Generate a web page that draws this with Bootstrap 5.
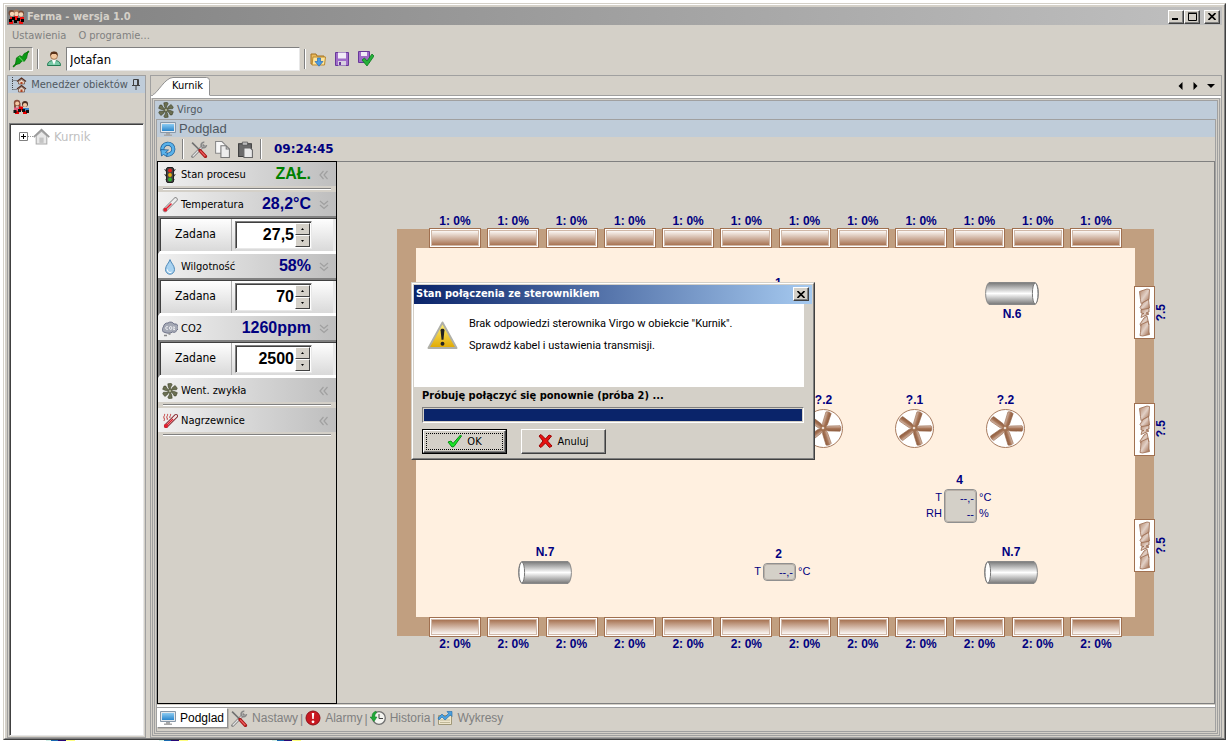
<!DOCTYPE html>
<html lang="pl">
<head>
<meta charset="utf-8">
<meta name="viewport" content="width=device-width, initial-scale=1">
<title>Ferma - wersja 1.0</title>
<link href="https://cdn.jsdelivr.net/npm/bootstrap@5.3.0/dist/css/bootstrap.min.css" rel="stylesheet">
<style>
:root{--face:#d4d0c8;--line:#a0a0a0;--bar:#bfccd9;--navy:#000080;--wood:#c19f80;--brown:#a07050}
body{font-family:"DejaVu Sans Condensed","DejaVu Sans",sans-serif;font-size:11px;line-height:14px;color:#000;background:#fff;padding:3px 0 0 3px}
button{font:inherit;color:inherit;background:none;border:0;padding:0;border-radius:0}
a{color:inherit;text-decoration:none}
input{font:inherit;border-radius:0;min-width:0}
svg{display:block;flex:none}
.arial{font-family:"Liberation Sans",Arial,sans-serif}
.fill{flex:1 1 0;min-height:0;min-width:0}
.win{background:var(--face);border:1px solid;border-color:var(--face) #404040 #404040 var(--face)}
.win-in{border:1px solid;border-color:#fff #808080 #808080 #fff;padding:2px 2px 0 2px}
.titlebar{height:18px;background:linear-gradient(90deg,#808080,#c0c0c0);color:var(--face);font-weight:700;padding:1px 2px 0 1px}
.titlebar span{padding-left:2px}
.cap{width:16px;height:14px;background:var(--face);border:1px solid;border-color:#fff #404040 #404040 #fff;box-shadow:inset -1px -1px #808080;display:flex;align-items:center;justify-content:center;color:#000}
.menu{height:20px;padding:1px 5px 0;gap:12px;color:#808080}
.tools{height:30px;padding:2px 2px 4px}
.tools label{padding:0 4px 0 7px}
.conn{width:24px;height:24px;border:1px solid;border-color:#808080 #fff #fff #808080;display:flex;align-items:center;justify-content:center;background:#cbc7bf}
.rule-v{width:2px;height:20px;border-left:1px solid #808080;border-right:1px solid #fff}
.user-box{width:234px;height:24px;border:1px solid;border-color:#808080 #e8e8e8 #e8e8e8 #808080;padding:0 3px;font-size:13px;background:#fff}
.side{width:139px;border:1px solid var(--line)}
.side-head{height:17px;background:var(--bar);color:#505860;padding:0 5px 0 3px}
.side-tools{height:30px;padding:6px 5px}
.tree{border:1px solid;border-color:#808080 #e8e8e8 #e8e8e8 #808080;box-shadow:inset 1px 1px #404040;background:#fff;margin:0 1px 1px;padding:4px 9px;color:#c0c0c0;font-size:13px;line-height:16px}
.frame{border:1px solid var(--line)}
.outer{padding-bottom:1px}
.mid{margin:0 1px;padding:1px}
.work{margin:0 1px 1px}
.strip{height:19px;padding:0 2px}
.page-tab{width:57px;height:18px;padding-left:12px;color:#000;position:relative;z-index:1}
.page-tab svg{position:absolute;left:0;top:0;z-index:-1}
.edge{border-top:1px solid var(--line);border-bottom:2px solid #fff;height:3px}
.head{background:var(--bar);color:#505860;gap:3px;height:18px;padding:0 3px}
.head.sub{height:17px;font-size:13px}
.work-tools{height:24px;gap:6px;padding:0 3px}
.clock{font-family:"DejaVu Sans",sans-serif;font-weight:700;font-size:12px;color:var(--navy);padding-left:6px}
.panel{width:180px;border:1px solid #000}
.grp{height:24px;background:linear-gradient(90deg,#f0f0f0,#bebebe);padding:1px 7px 0 4px;gap:3px}
.grp .reading{font-weight:700;font-size:16px;line-height:22px;color:var(--navy);padding:0 1px 2px 0}
.grp .on{color:#008000}
.sep{height:6px;padding:2px 5px}
.sep::before{content:"";display:block;height:2px;border-top:1px solid #808080;border-bottom:1px solid #fff}
.setbox{height:38px;background:linear-gradient(#fff,#d9d9d9);border-top:2px solid #808080;border-left:2px solid #808080;border-bottom:3px solid #fff;box-shadow:inset 1px 1px #404040,inset -3px 0 #e8e8e8;font-size:12px}
.setbox label{width:72px;text-align:center;border-right:1px solid #b0b0b0;height:32px;line-height:30px;margin-top:1px}
.spin{width:77px;height:28px;margin:3px 0 0 3px;border:1px solid;border-color:#808080 #e8e8e8 #e8e8e8 #808080;box-shadow:inset 1px 1px #404040;background:#fff;padding:1px}
.spin input{width:58px;border:0;padding:0 1px 0 0;text-align:right;font-weight:700;font-size:16px;background:none}
.spin button{width:15px;height:12px;border:1px solid;border-color:#fff #404040 #404040 #fff;background:var(--face);display:flex;align-items:center;justify-content:center}
.canvas{border:1px solid #808080;border-left:0;font-size:12px;line-height:14px;color:var(--navy)}
.house{width:757px;height:407px;border:19px solid var(--wood);background:#fff0e0;position:relative}
.vents{position:absolute;left:13px;right:13px;display:flex;justify-content:space-between;font-weight:700;text-align:center}
.vents.north{top:-34px}
.vents.south{bottom:-34px}
.vent{display:block;width:52px;height:20px;border:1px solid var(--brown);padding:1px;background:#fff}
.vent::before{content:"";display:block;height:100%;border:1px solid #d0b8a8;background:linear-gradient(#fbf7f4,#a87454)}
.south .vent::before{background:linear-gradient(#a87454,#fbf7f4)}
.east{position:absolute;top:38px;bottom:45px;left:718px;display:flex;flex-direction:column;justify-content:space-between;font-weight:700}
.east div{display:flex;align-items:center}
.side-fan{width:21px;height:53px;border:1px solid var(--brown);background:#fff}
.turned{writing-mode:vertical-rl;transform:rotate(180deg);line-height:12px}
.node{position:absolute;display:flex;flex-direction:column;align-items:center;gap:2px;font-weight:700}
.sensor{display:grid;grid-template-columns:18px 33px 16px;column-gap:2px;font-weight:400;font-size:11px;line-height:16px}
.sensor .read{border:1px solid #909090;outline:1px solid #b8b0a8;outline-offset:-2px;border-radius:4px;background:var(--face);text-align:right;padding-right:2px}
.n6{left:569px;top:34px}.n7a{left:102px;top:297px}.n7b{left:568px;top:297px}
.f1{left:388px;top:145px}.f2{left:479px;top:145px}.f3{left:570px;top:145px}
.s1{left:359px;top:28px}.s2{left:327px;top:299px}.s4{left:508px;top:225px}
.tabs{height:24px;border-top:1px solid var(--line);color:#808080;font-size:12px;gap:2px}
.tabs a{gap:4px;height:20px}
.tabs .now{background:#fff;color:#000;border:1px solid;border-color:#fff #909090 #909090 #fff;padding:0 3px 0 2px;box-shadow:1px 1px #b8b4ac}
.rest{height:1px;background:linear-gradient(90deg,#fff 43px,#d0f0e8 43px 48px,#1868b0 48px 55px,#280878 55px 63px,#ffff80 63px 72px,#fff 72px)0 0/113px 1px;width:339px;flex:none}
.dlg{width:404px;background:var(--face);border:1px solid;border-color:var(--face) #404040 #404040 var(--face);z-index:5}
.dlg-in{border:1px solid;border-color:#fff #808080 #808080 #fff;padding:1px 1px 4px}
.dlg-title{height:19px;background:linear-gradient(90deg,#0a246a,#a6caf0);color:#fff;font-weight:700;padding:0 3px 0 2px}
.dlg-msg{background:#fff;height:83px;margin-right:8px;padding:13px 13px;gap:11px;font-family:Roboto,sans-serif}
.dlg-msg p{margin:0 0 8px}
.dlg-body{padding:1px 8px 0;line-height:15px}
.bar{height:16px;border-radius:0;border:1px solid;border-color:#808080 #fff #fff #808080;background:var(--face);padding:1px}
.bar .progress-bar{background:#0a246a}
.cmds{gap:14px;padding-top:6px}
.cmd{width:85px;height:25px;background:var(--face);border:1px solid;border-color:#fff #404040 #404040 #fff;box-shadow:inset -1px -1px #808080;gap:4px}
.cmd.main{outline:1px solid #000;outline-offset:-1px;border:2px solid;border-color:#fff #404040 #404040 #fff;position:relative}
.cmd.main::after{content:"";position:absolute;inset:2px;border:1px dotted #000}
</style>
</head>
<body class="vh-100 d-flex flex-column overflow-hidden">
<svg width="0" height="0" class="position-absolute" aria-hidden="true">
<defs>
<linearGradient id="gCyl" x2="0" y2="1"><stop stop-color="#777"/><stop offset=".5" stop-color="#fff"/><stop offset="1" stop-color="#777"/></linearGradient>
<linearGradient id="gBr" x2="0" y2="1"><stop stop-color="#d8c0b2"/><stop offset=".5" stop-color="#a87658"/><stop offset="1" stop-color="#8c5a3c"/></linearGradient>
<linearGradient id="gSf" x2="1" y2="1"><stop stop-color="#b08468"/><stop offset=".5" stop-color="#e2d0c6"/><stop offset="1" stop-color="#9a6444"/></linearGradient>
<linearGradient id="gBlue" x2="0" y2="1"><stop stop-color="#8ccbf2"/><stop offset="1" stop-color="#2a86cc"/></linearGradient>
<linearGradient id="gY" x2="0" y2="1"><stop stop-color="#fff27a"/><stop offset="1" stop-color="#e0a800"/></linearGradient>
<symbol id="people" viewBox="0 0 17 16"><circle cx="4" cy="4" r="3.2" fill="#8b4d3a"/><path d="M1 4h2v5H1zM5.500 4h2v5h-2z" fill="#8b4d3a"/><circle cx="4.200" cy="4.500" r="2" fill="#f4c9a4"/><circle cx="12" cy="5" r="3" fill="#4b2d20"/><circle cx="12" cy="6" r="2.100" fill="#f4c9a4"/><path d="M1 8.500h6v5H1z" fill="#e06080"/><path d="M9 9h7v3H9z" fill="#3e86c8"/><path d="M6 7.500h4v4H6zM2 12h4v3H2zM10 12h4v3h-4z" fill="#e80000"/><path d="M5 10h3v3H5zM.5 11h3v3h-3zM9 10h3v3H9zM13 11h3v3h-3z" fill="#111"/></symbol>
<symbol id="crew" viewBox="0 0 17 16"><circle cx="3.500" cy="4" r="3" fill="#7a4a34"/><circle cx="8.500" cy="3.500" r="3" fill="#a97a5a"/><circle cx="13" cy="4.500" r="3" fill="#7a4a34"/><circle cx="4" cy="5" r="2.200" fill="#f7d4b4"/><circle cx="8.500" cy="5" r="2.200" fill="#f7d4b4"/><circle cx="13" cy="5.500" r="2.200" fill="#f7d4b4"/><path d="M2 8h3v2H2zM6 7h4v4H6zM12 8h4v3h-4zM1 12h4v3H1zM11 12h4v3h-4z" fill="#f01010"/><path d="M4 8h3v3H4zM1 10h3v3H1zM9 9h3v3H9zM13 10h3v3h-3zM6 11h3v3H6z" fill="#000"/></symbol>
<symbol id="plug" viewBox="0 0 16 16"><path d="M1 15l3-3M12 4l3-3" stroke="#0a7a0a" stroke-width="1.500"/><path d="M3 13L4 7l3-2 2 1 2-3 3-1-1 5-2 3-2-.5L7 12z" fill="#0a9a14" stroke="#067006" stroke-width=".7"/><path d="M6 6l4.500 4.500" stroke="#58c858"/></symbol>
<symbol id="user" viewBox="0 0 16 16"><path d="M1.500 14.500c0-4 3-5 6.500-5s6.500 1 6.500 5z" fill="#79c9a7" stroke="#227a52"/><path d="M6 9h4l-2 5z" fill="#fff"/><circle cx="8" cy="4.800" r="3.500" fill="#f3c9a0" stroke="#7d4a24" stroke-width=".6"/><path d="M4.300 5C4 1 6 .5 8 .5s4 .5 3.700 4.500L10 3H6z" fill="#5a3219"/></symbol>
<symbol id="open" viewBox="0 0 16 16"><path d="M1 3h5l1 2h7v8H1z" fill="#e9b85a" stroke="#a4701e"/><path d="M3 6h12.500l-1 8H2z" fill="#ffe49a" stroke="#b98a30"/><path d="M7.500 7h3v3.500H13L9 15.200 5 10.500h2.500z" fill="#4a9be0" stroke="#2a6cb4" stroke-width=".7"/></symbol>
<symbol id="disk" viewBox="0 0 16 16"><path d="M1.500 1.500h13v13h-13z" fill="#a06cc8" stroke="#68389a"/><path d="M4 1.500h8v6H4z" fill="#f2ecf8"/><path d="M4 10h8v4.500H4z" fill="#d8d0e0"/><path d="M5 11h2v3H5z" fill="#68389a"/></symbol>
<symbol id="diskok" viewBox="0 0 16 16"><path d="M.5.5h11v11H.5z" fill="#a06cc8" stroke="#68389a"/><path d="M3 1h6v4H3z" fill="#f2ecf8"/><path d="M4 9l2.500-2L9 10l5-7 2 2-7 10z" fill="#25b03a" stroke="#0d7a20" stroke-width=".8"/></symbol>
<symbol id="houses" viewBox="0 0 16 16"><path d="M1.500 0v12.500M1.500 3.500H6M1.500 12.500H6" stroke="#444" stroke-dasharray="1 1" fill="none"/><path d="M6 4.500L10.500 1 15 4.500M6 12L10.500 8.500 15 12" stroke="#5a3020" fill="none" stroke-width="1.300"/><path d="M7.500 4.500l3-2 3 2V7h-6zM7.500 12l3-2 3 2v3h-6z" fill="#e9d4c4" stroke="#5a3020" stroke-width=".6"/><path d="M9.500 5h2v2h-2zM9.500 12.500h2v2.500h-2z" fill="#b04020"/></symbol>
<symbol id="home" viewBox="0 0 16 16"><path d="M3 7.500V15h10V7.500L8 3z" fill="#e8e8e8" stroke="#aaa"/><path d="M.7 8.500L8 1.500l7.300 7" stroke="#999" stroke-width="1.600" fill="none"/><path d="M6 9h4v5H6z" fill="#c4c4c4"/></symbol>
<symbol id="blades" viewBox="0 0 16 16"><g fill="#6b6f52" stroke="#35381f" stroke-width=".5"><path id="bl" d="M8 7.500L6.200 4 5.800.8l3.400-.5 1 1.500L8.800 4z"/><use href="#bl" transform="rotate(60 8 8)"/><use href="#bl" transform="rotate(120 8 8)"/><use href="#bl" transform="rotate(180 8 8)"/><use href="#bl" transform="rotate(240 8 8)"/><use href="#bl" transform="rotate(300 8 8)"/></g><circle cx="8" cy="8" r="1.800" fill="#a9ac8e" stroke="#35381f" stroke-width=".5"/></symbol>
<symbol id="screen" viewBox="0 0 16 16"><path d="M.5 1.500h15v10H.5z" fill="#e4e8ec" stroke="#8898a8"/><path d="M2 3h12v7H2z" fill="url(#gBlue)"/><path d="M6 12h4v1.500h2V15H4v-1.500h2z" fill="#a8a8a8"/></symbol>
<symbol id="reload" viewBox="0 0 16 16"><path d="M2.500 9.500a5.500 5.500 0 1 1 4 4" stroke="#1c5c94" stroke-width="4" fill="none"/><path d="M2.500 9.500a5.500 5.500 0 1 1 4 4" stroke="#5ab2ea" stroke-width="2.600" fill="none"/><path d="M8.500 9L.8 8.500 1.500 15l2-1.500 3 1.800 1-3-2-.8z" fill="#5ab2ea" stroke="#1c5c94" stroke-width=".8"/></symbol>
<symbol id="wrench" viewBox="0 0 16 16"><path d="M2 14.500L12 4.500" stroke="#777" stroke-width="2.600" stroke-linecap="round"/><path d="M2 14.500L12 4.500" stroke="#e4e4e4" stroke-width="1.300"/><path d="M13 1.300a2.500 2.500 0 1 0 2 2.500" stroke="#888" stroke-width="1.500" fill="none"/><path d="M1.500 1.500l7 7" stroke="#707070" stroke-width="1.500"/><path d="M9 9l5 5.500" stroke="#a81818" stroke-width="3.200" stroke-linecap="round"/><path d="M9 9l5 5.300" stroke="#f06060" stroke-width="1.200"/></symbol>
<symbol id="copy" viewBox="0 0 16 16"><path d="M1.500.5h6l3 3v8h-9z" fill="#f8f8f8" stroke="#888"/><path d="M6.500 4.500h5l3 3v8h-8z" fill="#ededed" stroke="#777"/><path d="M11.500 4.500v3h3" fill="none" stroke="#777"/></symbol>
<symbol id="paste" viewBox="0 0 16 16"><path d="M1.500 2.500h12v12h-12z" fill="#6b6b6b" stroke="#3b3b3b"/><path d="M5 1h5v3H5z" fill="#bbb" stroke="#444" stroke-width=".6"/><path d="M6.500 6.500h6l2 2v7h-8z" fill="#e9e9e9" stroke="#666"/></symbol>
<symbol id="lights" viewBox="0 0 16 16"><path d="M2 2l3 1v3zM14 2l-3 1v3zM2 7l3 1v3zM14 7l-3 1v3zM3 12l2 1v2zM13 12l-2 1v2z" fill="#333"/><rect x="4.500" y=".5" width="7" height="15" rx="1.500" fill="#444" stroke="#222"/><circle cx="8" cy="3.500" r="1.900" fill="#e02020"/><circle cx="8" cy="8" r="1.900" fill="#e8b010"/><circle cx="8" cy="12.500" r="1.900" fill="#30b030"/></symbol>
<symbol id="thermo" viewBox="0 0 16 16"><path d="M3 13L13.500 2.500" stroke="#888" stroke-width="4.500" stroke-linecap="round"/><path d="M3 13L13.500 2.500" stroke="#eee" stroke-width="2.800" stroke-linecap="round"/><path d="M3.200 12.800L9 7" stroke="#e02030" stroke-width="1.600" stroke-linecap="round"/><circle cx="3.300" cy="12.700" r="1.900" fill="#e02030"/></symbol>
<symbol id="drop" viewBox="0 0 16 16"><path d="M8 .6c1 3.400 4.500 6 4.500 9.800a4.500 4.800 0 0 1-9 0C3.500 6.600 7 4 8 .6z" fill="#a8d2f0" stroke="#4c88b8"/><path d="M5.500 10.500a2.600 2.600 0 0 0 4 2.600" stroke="#fff" fill="none"/></symbol>
<symbol id="cloud" viewBox="0 0 16 16"><path d="M3 11.500A3 3 0 0 1 1.500 6 4 4 0 0 1 6 2a4 4 0 0 1 6 1 3.500 3.500 0 0 1 2.500 6.500c-1 2.500-3 2-4 1.500-2 1.500-5 1.500-7.500.5z" fill="#a4a8b4" stroke="#70748a"/><path d="M6 6a1.300 1.500 0 1 0 0 2M7.500 7a1.200 1.500 0 1 0 2.400 0 1.200 1.500 0 1 0-2.400 0M11 6h1.500L11.500 8.500H13" stroke="#fff" stroke-width=".8" fill="none"/><path d="M2 14.500h3M6.500 13h2" stroke="#888" stroke-width="1.500"/></symbol>
<symbol id="heat" viewBox="0 0 16 16"><path d="M2 1c2 1-1 2 0 4s0 2 0 3M5 1c2 1-1 2 0 4s0 1 0 2M8 1c2 1-1 2 0 4" stroke="#c03030" fill="none"/><path d="M4 13L14 3" stroke="#802028" stroke-width="4" stroke-linecap="round"/><path d="M4 13L14 3" stroke="#f4e4e4" stroke-width="2.400" stroke-linecap="round"/><path d="M4 13l7-7" stroke="#e02030" stroke-width="1.400"/><circle cx="4" cy="13" r="2" fill="#e02030"/></symbol>
<symbol id="alarm" viewBox="0 0 16 16"><circle cx="8" cy="8" r="7" fill="#c81820" stroke="#901018"/><path d="M6.800 3h2.400l-.5 6H7.300z" fill="#fff"/><circle cx="8" cy="11.800" r="1.400" fill="#fff"/></symbol>
<symbol id="hist" viewBox="0 0 16 16"><circle cx="9" cy="8" r="6.300" fill="#f4f4f0" stroke="#707070" stroke-width="1.300"/><path d="M9 4v4.500h4" stroke="#444" fill="none"/><path d="M6 1.200C2 2.500 2 5 2.300 7H0l4 4.500L7 7H5c-.3-2 0-3 1.500-4z" fill="#20a838" stroke="#0c7820" stroke-width=".5"/></symbol>
<symbol id="chart" viewBox="0 0 16 16"><path d="M1.500 5.500h13v9h-13z" fill="#efe6cc" stroke="#a09878"/><path d="M3 10h10M3 12.500h10" stroke="#c0b898"/><path d="M1 8l4-4 3 3 3.500-3.500L10 1.500h5v5l-1.500-1.500L8 10 5 7 2 10z" fill="#4aa0e0" stroke="#1e68a8" stroke-width=".6"/></symbol>
<symbol id="cyl" viewBox="0 0 54 23"><path d="M4 .5h46c4.500 3 4.500 19 0 22H4C-.5 19-.5 3 4 .5z" fill="url(#gCyl)" stroke="#888"/><ellipse cx="3.800" cy="11.500" rx="2.800" ry="10.500" fill="#fff" stroke="#777"/></symbol>
<symbol id="fan" viewBox="0 0 39 39"><circle cx="19.500" cy="19.500" r="19" fill="#fff" stroke="#a87c60"/><path id="fb" d="M19.500 18.500l5-1.500 11.500-.3c1.200 1.500 1.200 4 0 5.500l-11.500-.2-5-1.500z" fill="url(#gBr)" stroke="#9a6a4e" stroke-width=".6"/><use href="#fb" transform="rotate(72 19.500 19.500)"/><use href="#fb" transform="rotate(144 19.500 19.500)"/><use href="#fb" transform="rotate(216 19.500 19.500)"/><use href="#fb" transform="rotate(288 19.500 19.500)"/><circle cx="19.500" cy="19.500" r="3" fill="#a07050"/><circle cx="19" cy="19" r="1.300" fill="#ecdcd0"/></symbol>
<symbol id="sfan" viewBox="0 0 19 51"><g fill="url(#gSf)" stroke="#9a6a4e" stroke-width=".8"><path d="M4.500 4.500L12 2l2.500.5-.5 10L6 16.500l-.5-4z"/><path d="M5 20.500l3-5 5.500-3 .5 4 .5 4.500-7 2.500z"/><path d="M6 22.500l8-1v3.500l-3 1 3 1-8 3.500 1-3.500 2-.5-3-.5z"/><path d="M5 37l4-6 3-2 1.500 6.500L14 38l-4-1-4 2.500z"/><path d="M6 37.500l7-3 1 4v6.500l.5 2.500-7 1.500-2.500-.5.500-3z"/></g></symbol>
<symbol id="warn" viewBox="0 0 32 30"><path d="M16 1.500L30.500 28h-29z" fill="url(#gY)" stroke="#b0b0a8" stroke-width="2" stroke-linejoin="round"/><path d="M14 9.500c0-2 4-2 4 0l-1 10h-2z" fill="#222"/><circle cx="16" cy="23.500" r="2" fill="#222"/></symbol>
<symbol id="chevl" viewBox="0 0 10 10"><path d="M4.500 1L1 5l3.500 4M8.500 1L5 5l3.500 4" stroke="#a0a0a0" stroke-width="1.200" fill="none"/></symbol>
<symbol id="chevd" viewBox="0 0 10 10"><path d="M1 1l4 3.500L9 1M1 5l4 3.500L9 5" stroke="#a0a0a0" stroke-width="1.200" fill="none"/></symbol>
<symbol id="up" viewBox="0 0 3 2"><path d="M0 2l1.500-2L3 2z"/></symbol>
<symbol id="down" viewBox="0 0 3 2"><path d="M0 0l1.500 2L3 0z"/></symbol>
<symbol id="x" viewBox="0 0 8 7"><path d="M.5 0l7 7M7.500 0l-7 7" stroke="#000" stroke-width="1.600"/></symbol>
</defs>
</svg>

<div class="win fill d-flex flex-column">
<div class="win-in fill d-flex flex-column">
  <header class="titlebar d-flex align-items-center flex-shrink-0">
    <svg width="17" height="16"><use href="#crew"/></svg>
    <span class="flex-grow-1">Ferma - wersja 1.0</span>
    <button class="cap" aria-label="Minimalizuj"><svg width="8" height="7"><path d="M0 5h6v2H0z"/></svg></button>
    <button class="cap me-1" aria-label="Maksymalizuj"><svg width="9" height="9"><path d="M.5 1.500h8v7h-8zM0 1h9" fill="none" stroke="#000"/></svg></button>
    <button class="cap" aria-label="Zamknij"><svg width="8" height="7"><use href="#x"/></svg></button>
  </header>
  <nav class="menu d-flex align-items-center flex-shrink-0"><a href="#">Ustawienia</a><a href="#">O programie...</a></nav>
  <div class="tools d-flex align-items-center flex-shrink-0">
    <button class="conn" aria-label="Połącz"><svg width="18" height="18"><use href="#plug"/></svg></button>
    <span class="rule-v ms-1"></span>
    <label for="user" aria-label="Użytkownik"><svg width="16" height="16"><use href="#user"/></svg></label>
    <input id="user" class="user-box" type="text" value="Jotafan">
    <span class="rule-v ms-1"></span>
    <div class="d-flex gap-2 ps-1">
      <button aria-label="Otwórz"><svg width="16" height="16"><use href="#open"/></svg></button>
      <button aria-label="Zapisz"><svg width="16" height="16"><use href="#disk"/></svg></button>
      <button aria-label="Zatwierdź"><svg width="16" height="16"><use href="#diskok"/></svg></button>
    </div>
  </div>

  <div class="fill d-flex gap-1">
    <aside class="side d-flex flex-column flex-shrink-0">
      <div class="side-head d-flex align-items-center justify-content-between">
        <svg width="16" height="16"><use href="#houses"/></svg><span>Menedżer obiektów</span>
        <svg width="8" height="11"><path d="M1.500 6V.5h5V6M0 6.500h8M4 7v4M5.500 1v5" fill="none" stroke="#404040"/></svg>
      </div>
      <div class="side-tools"><button aria-label="Obiekty"><svg width="17" height="16"><use href="#people"/></svg></button></div>
      <div class="tree flex-grow-1"><div class="d-flex align-items-center">
        <svg width="14" height="9"><path d="M.5.500h8v8h-8z" fill="#fff" stroke="#808080"/><path d="M2 4.500h5M4.500 2v5" stroke="#000"/><path d="M9 4.500h5" stroke="#999" stroke-dasharray="1 1"/></svg>
        <svg width="17" height="17"><use href="#home"/></svg><span class="ps-1">Kurnik</span></div></div>
    </aside>

    <main class="frame outer fill d-flex flex-column">
      <div class="strip d-flex align-items-end justify-content-between flex-shrink-0">
        <button class="page-tab"><svg width="60" height="22"><path d="M0 20V17.500C4 17 12 .500 20 .500h33.500q3 0 3 3V21H0z" fill="#fff"/><path d="M0 17.500C4 17 12 .500 20 .500h33.500q3 0 3 3V18" fill="none" stroke="#909090"/></svg>Kurnik</button>
        <div class="d-flex align-items-center gap-2 h-100 pe-1">
          <button aria-label="Poprzednia"><svg width="7" height="8"><path d="M5.500 0v8l-4-4z"/></svg></button>
          <button aria-label="Następna"><svg width="7" height="8"><path d="M1.500 0v8l4-4z"/></svg></button>
          <button aria-label="Lista"><svg width="8" height="8"><path d="M0 2h8L4 6z"/></svg></button>
        </div>
      </div>
      <div class="edge flex-shrink-0"></div>
      <section class="frame mid fill d-flex flex-column"><div class="frame fill d-flex flex-column">
        <div class="head d-flex align-items-center flex-shrink-0"><svg width="16" height="16"><use href="#blades"/></svg>Virgo</div>
        <section class="frame work fill d-flex flex-column">
          <div class="head sub arial d-flex align-items-center flex-shrink-0"><svg width="16" height="16"><use href="#screen"/></svg>Podglad</div>
          <div class="work-tools d-flex align-items-center flex-shrink-0">
            <button aria-label="Odśwież"><svg width="16" height="16"><use href="#reload"/></svg></button><span class="rule-v"></span>
            <button aria-label="Ustawienia"><svg width="18" height="17"><use href="#wrench"/></svg></button>
            <button aria-label="Kopiuj"><svg width="17" height="17"><use href="#copy"/></svg></button>
            <button aria-label="Wklej"><svg width="17" height="17"><use href="#paste"/></svg></button><span class="rule-v"></span>
            <time class="clock">09:24:45</time>
          </div>
          <div class="fill d-flex">
            <div class="panel flex-shrink-0">
              <div class="grp d-flex align-items-center"><svg width="16" height="16"><use href="#lights"/></svg><span class="flex-grow-1">Stan procesu</span><b class="reading on arial">ZAŁ.</b><svg class="ms-1" width="10" height="10"><use href="#chevl"/></svg></div>
              <div class="sep"></div>
              <div class="grp d-flex align-items-center"><svg width="16" height="16"><use href="#thermo"/></svg><span class="flex-grow-1">Temperatura</span><b class="reading arial">28,2°C</b><svg class="ms-1" width="10" height="10"><use href="#chevd"/></svg></div>
              <div class="setbox d-flex"><label for="t">Zadana</label><div class="spin d-flex"><input id="t" class="arial" type="text" value="27,5"><div><button aria-label="Więcej"><svg width="3" height="2"><use href="#up"/></svg></button><button aria-label="Mniej"><svg width="3" height="2"><use href="#down"/></svg></button></div></div></div>
              <div class="grp d-flex align-items-center"><svg width="16" height="16"><use href="#drop"/></svg><span class="flex-grow-1">Wilgotność</span><b class="reading arial">58%</b><svg class="ms-1" width="10" height="10"><use href="#chevd"/></svg></div>
              <div class="setbox d-flex"><label for="w">Zadana</label><div class="spin d-flex"><input id="w" class="arial" type="text" value="70"><div><button aria-label="Więcej"><svg width="3" height="2"><use href="#up"/></svg></button><button aria-label="Mniej"><svg width="3" height="2"><use href="#down"/></svg></button></div></div></div>
              <div class="grp d-flex align-items-center"><svg width="16" height="16"><use href="#cloud"/></svg><span class="flex-grow-1">CO2</span><b class="reading arial">1260ppm</b><svg class="ms-1" width="10" height="10"><use href="#chevd"/></svg></div>
              <div class="setbox d-flex"><label for="c">Zadane</label><div class="spin d-flex"><input id="c" class="arial" type="text" value="2500"><div><button aria-label="Więcej"><svg width="3" height="2"><use href="#up"/></svg></button><button aria-label="Mniej"><svg width="3" height="2"><use href="#down"/></svg></button></div></div></div>
              <div class="grp d-flex align-items-center"><svg width="16" height="16"><use href="#blades"/></svg><span class="flex-grow-1">Went. zwykła</span><svg width="10" height="10"><use href="#chevl"/></svg></div>
              <div class="sep"></div>
              <div class="grp d-flex align-items-center"><svg width="16" height="16"><use href="#heat"/></svg><span class="flex-grow-1">Nagrzewnice</span><svg width="10" height="10"><use href="#chevl"/></svg></div>
              <div class="sep"></div>
            </div>
            <div class="canvas arial fill d-flex align-items-center justify-content-center">
              <div class="house flex-shrink-0">
                <div class="vents north"><div>1: 0%<i class="vent"></i></div><div>1: 0%<i class="vent"></i></div><div>1: 0%<i class="vent"></i></div><div>1: 0%<i class="vent"></i></div><div>1: 0%<i class="vent"></i></div><div>1: 0%<i class="vent"></i></div><div>1: 0%<i class="vent"></i></div><div>1: 0%<i class="vent"></i></div><div>1: 0%<i class="vent"></i></div><div>1: 0%<i class="vent"></i></div><div>1: 0%<i class="vent"></i></div><div>1: 0%<i class="vent"></i></div></div>
                <div class="vents south"><div><i class="vent"></i>2: 0%</div><div><i class="vent"></i>2: 0%</div><div><i class="vent"></i>2: 0%</div><div><i class="vent"></i>2: 0%</div><div><i class="vent"></i>2: 0%</div><div><i class="vent"></i>2: 0%</div><div><i class="vent"></i>2: 0%</div><div><i class="vent"></i>2: 0%</div><div><i class="vent"></i>2: 0%</div><div><i class="vent"></i>2: 0%</div><div><i class="vent"></i>2: 0%</div><div><i class="vent"></i>2: 0%</div></div>
                <div class="east">
                  <div><span class="side-fan"><svg width="19" height="51"><use href="#sfan"/></svg></span><span class="turned">?.5</span></div>
                  <div><span class="side-fan"><svg width="19" height="51"><use href="#sfan"/></svg></span><span class="turned">?.5</span></div>
                  <div><span class="side-fan"><svg width="19" height="51"><use href="#sfan"/></svg></span><span class="turned">?.5</span></div>
                </div>
                <div class="node n6"><svg width="54" height="23"><g transform="translate(54) scale(-1 1)"><use href="#cyl" width="54" height="23"/></g></svg>N.6</div>
                <div class="node n7a">N.7<svg width="54" height="23"><use href="#cyl"/></svg></div>
                <div class="node n7b">N.7<svg width="54" height="23"><use href="#cyl"/></svg></div>
                <div class="node f1">?.2<svg width="39" height="39"><use href="#fan"/></svg></div>
                <div class="node f2">?.1<svg width="39" height="39"><use href="#fan"/></svg></div>
                <div class="node f3">?.2<svg width="39" height="39"><use href="#fan"/></svg></div>
                <div class="node s1">1</div>
                <div class="node s2">2<div class="sensor"><span class="text-end">T</span><span class="read">--,-</span><span>°C</span></div></div>
                <div class="node s4">4<div class="sensor"><span class="text-end">T<br>RH</span><span class="read">--,-<br>--</span><span>°C<br>%</span></div></div>
              </div>
            </div>
          </div>
          <div class="edge flex-shrink-0 border-top-0"></div>
          <nav class="tabs arial d-flex flex-shrink-0">
            <a href="#" class="now d-flex align-items-center"><svg width="16" height="16"><use href="#screen"/></svg>Podglad</a>
            <a href="#" class="d-flex align-items-center"><svg width="18" height="17"><use href="#wrench"/></svg>Nastawy</a><span class="pt-1">|</span>
            <a href="#" class="d-flex align-items-center"><svg width="16" height="16"><use href="#alarm"/></svg>Alarmy</a><span class="pt-1">|</span>
            <a href="#" class="d-flex align-items-center"><svg width="16" height="16"><use href="#hist"/></svg>Historia</a><span class="pt-1">|</span>
            <a href="#" class="d-flex align-items-center"><svg width="16" height="16"><use href="#chart"/></svg>Wykresy</a>
          </nav>
        </section>
      </div></section>
    </main>
  </div>
</div>
</div>
<div class="rest"></div>

<div class="dlg position-absolute top-50 start-50 translate-middle" role="dialog" aria-labelledby="dt"><div class="dlg-in">
  <div class="dlg-title d-flex align-items-center justify-content-between"><span id="dt">Stan połączenia ze sterownikiem</span><button class="cap" aria-label="Zamknij"><svg width="8" height="7"><use href="#x"/></svg></button></div>
  <div class="dlg-msg d-flex"><svg class="mt-1" width="31" height="29"><use href="#warn"/></svg><div><p>Brak odpowiedzi sterownika Virgo w obiekcie "Kurnik".</p><p>Sprawdź kabel i ustawienia transmisji.</p></div></div>
  <div class="dlg-body">
    <strong class="d-block mb-1">Próbuję połączyć się ponownie (próba 2) ...</strong>
    <div class="progress bar" role="progressbar" aria-label="Próba połączenia" aria-valuenow="100"><div class="progress-bar w-100"></div></div>
    <div class="cmds d-flex">
      <button class="cmd main d-flex align-items-center justify-content-center"><svg width="16" height="14"><path d="M1 8l3-1 2 2.500L13.500 1l1 1L7 12.500 5 13z" fill="#18e828" stroke="#0a8a14"/></svg>OK</button>
      <button class="cmd d-flex align-items-center justify-content-center"><svg width="15" height="14"><path d="M1 2l2-1.500L7.500 5 11 1l2.500 1-4 5 4.500 5-2.500 1.500L7.500 9 3 13.500 1 12l4-5z" fill="#e81010" stroke="#900"/></svg>Anuluj</button>
    </div>
  </div>
</div></div>
<script src="https://cdn.jsdelivr.net/npm/bootstrap@5.3.0/dist/js/bootstrap.bundle.min.js"></script>
</body>
</html>
